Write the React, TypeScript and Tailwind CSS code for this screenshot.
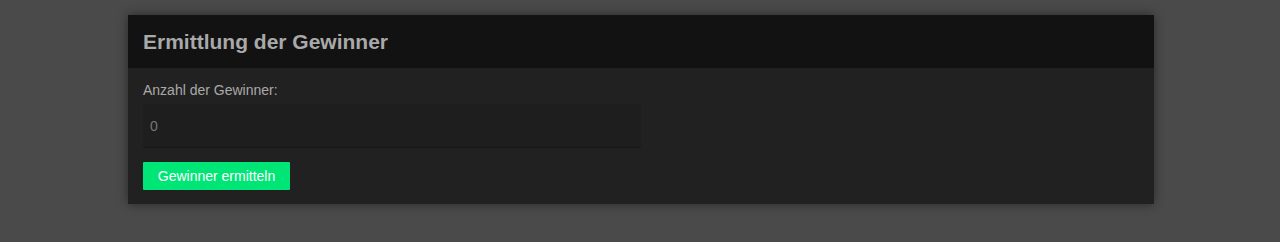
import React, { useState } from 'react';

export default function App() {
    const [count, setCount] = useState('');

    return (
        <div className="min-h-[242px] bg-[#4a4a4a] pt-[15px] font-['Liberation_Sans',Arial,sans-serif]">
            <div className="ml-[128px] w-[1026px] bg-[#212121] shadow-[0_0_10px_rgba(0,0,0,0.45)]">
                <div className="h-[53px] bg-[#121212] px-[15px] flex items-center">
                    <h2 className="text-[21px] font-bold text-[#a9a9a9] leading-none">Ermittlung der Gewinner</h2>
                </div>
                <div className="px-[15px] pt-[14px] pb-[14px]">
                    <label className="block text-[14px] leading-[16px] text-[#a9a9a9] mb-[6px]">Anzahl der Gewinner:</label>
                    <input
                        type="number"
                        value={count}
                        onChange={(e) => setCount(e.target.value)}
                        placeholder="0"
                        className="block w-[498px] h-[44px] bg-[#1e1e1e] border-b border-[#171717] px-[7px] text-[14px] text-[#bbb] placeholder:text-[#777] outline-none"
                    />
                    <button className="mt-[14px] h-[28px] w-[147px] bg-[#00e676] text-[14px] text-white rounded-[1px]">
                        Gewinner ermitteln
                    </button>
                </div>
            </div>
        </div>
    );
}
